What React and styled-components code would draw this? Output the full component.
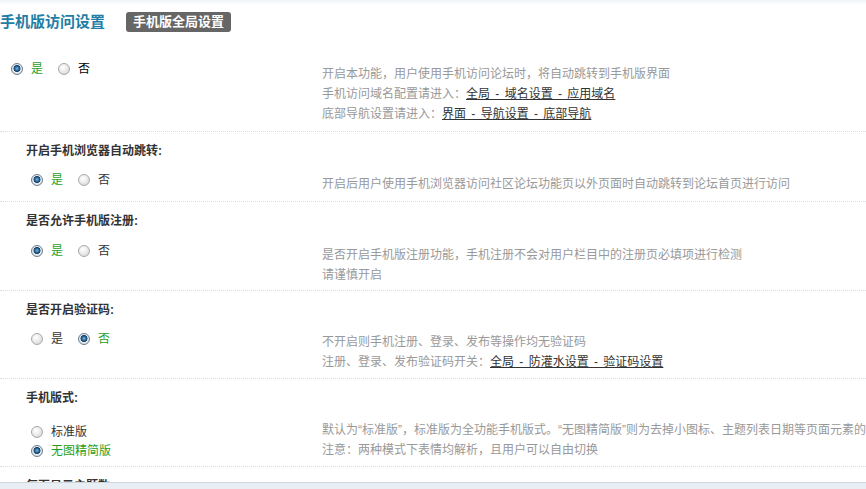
import styled, { createGlobalStyle } from 'styled-components'

const GlobalStyle = createGlobalStyle`
  html, body {
    margin: 0;
    padding: 0;
    background: #fff;
    overflow: hidden;
  }
  body {
    font-family: "Liberation Sans", "Noto Sans CJK SC", sans-serif;
    font-size: 12px;
    color: #333;
  }
`

const Page = styled.div`
  height: 489px;
  overflow: hidden;
  background: linear-gradient(#eef4fa 0, #fff 5px);
`

const TitleBar = styled.div`
  height: 46px;
  display: flex;
  align-items: flex-start;
  gap: 21px;
  padding-top: 12px;
  box-sizing: border-box;
`

const Title = styled.h3`
  margin: 0;
  font-size: 15px;
  line-height: 20px;
  font-weight: 700;
  color: #1e7ea5;
  white-space: nowrap;
`

const Badge = styled.span`
  display: inline-block;
  height: 20px;
  line-height: 20px;
  padding: 0 7px;
  background: #666;
  color: #fff;
  font-size: 13px;
  font-weight: 700;
  border-radius: 3px;
  white-space: nowrap;
`

const Setting = styled.div`
  border-bottom: 1px dotted #d6dde3;
  padding-bottom: ${p => p.$bottom ?? 7}px;
`

const Header = styled.div`
  padding: 9px 0 0 26px;
  line-height: 20px;
  font-weight: 700;
  color: #333;
  white-space: nowrap;
`

const Body = styled.div`
  display: grid;
  grid-template-columns: 322px 1fr;
  padding-top: ${p => p.$top ?? 9}px;
`

const Options = styled.ul`
  list-style: none;
  margin: 0;
  padding: 0 0 0 ${p => p.$indent ?? 31}px;
  display: flex;
  flex-direction: ${p => (p.$vertical ? 'column' : 'row')};
  gap: ${p => (p.$vertical ? '0' : '15px')};
  padding-top: ${p => p.$top ?? 0}px;
`

const Option = styled.li`
  display: flex;
  align-items: center;
  gap: 8px;
  height: ${p => (p.$vertical ? '19.5px' : '20px')};
  line-height: 20px;
  white-space: nowrap;
  color: ${p => (p.$checked ? '#1f9f1f' : p.$dark ? '#000' : '#333')};
`

const Radio = styled.span`
  width: 12px;
  height: 12px;
  box-sizing: border-box;
  border-radius: 50%;
  border: 1px solid ${p => (p.$checked ? '#6b7f90' : '#a9a9a9')};
  background: ${p =>
    p.$checked
      ? 'radial-gradient(circle at 50% 45%, #7fb6e0 0, #2a6a9c 2px, #163f62 3.2px, #e9edf1 3.8px, #cdd3d9 100%)'
      : 'radial-gradient(circle at 40% 35%, #ffffff 0, #eeeeee 40%, #cfcfcf 100%)'};
  flex: none;
`

const Tips = styled.div`
  color: #999;
  line-height: 20px;
  white-space: nowrap;
  padding-top: ${p => p.$top ?? 4}px;
`

const TipLink = styled.a`
  color: #333;
  text-decoration: underline;
  word-spacing: 2px;
`

const Footer = styled.div`
  position: fixed;
  left: 0;
  right: 0;
  bottom: 0;
  height: 6px;
  background: #e8eef3;
  border-top: 1px solid #cfd7de;
`

const RadioGroup = ({ items, value, indent, vertical, top, dark }) => (
  <Options $indent={indent} $vertical={vertical} $top={top}>
    {items.map(item => (
      <Option key={item} $checked={item === value} $vertical={vertical} $dark={dark && item !== value}>
        <Radio $checked={item === value} />
        {item}
      </Option>
    ))}
  </Options>
)

const App = () => {
  return (
    <Page>
      <GlobalStyle />
      <TitleBar>
        <Title>手机版访问设置</Title>
        <Badge>手机版全局设置</Badge>
      </TitleBar>

      <Setting $bottom={7}>
        <Body $top={13}>
          <RadioGroup items={['是', '否']} value="是" indent={11} dark />
          <Tips $top={5}>
            <div>开启本功能，用户使用手机访问论坛时，将自动跳转到手机版界面</div>
            <div>
              手机访问域名配置请进入：<TipLink>全局 - 域名设置 - 应用域名</TipLink>
            </div>
            <div>
              底部导航设置请进入：<TipLink>界面 - 导航设置 - 底部导航</TipLink>
            </div>
          </Tips>
        </Body>
      </Setting>

      <Setting $bottom={7}>
        <Header>开启手机浏览器自动跳转:</Header>
        <Body>
          <RadioGroup items={['是', '否']} value="是" />
          <Tips>开启后用户使用手机浏览器访问社区论坛功能页以外页面时自动跳转到论坛首页进行访问</Tips>
        </Body>
      </Setting>

      <Setting $bottom={5}>
        <Header>是否允许手机版注册:</Header>
        <Body $top={10}>
          <RadioGroup items={['是', '否']} value="是" />
          <Tips>
            <div>是否开启手机版注册功能，手机注册不会对用户栏目中的注册页必填项进行检测</div>
            <div>请谨慎开启</div>
          </Tips>
        </Body>
      </Setting>

      <Setting $bottom={6}>
        <Header>是否开启验证码:</Header>
        <Body>
          <RadioGroup items={['是', '否']} value="否" />
          <Tips $top={3}>
            <div>不开启则手机注册、登录、发布等操作均无验证码</div>
            <div>
              注册、登录、发布验证码开关：<TipLink>全局 - 防灌水设置 - 验证码设置</TipLink>
            </div>
          </Tips>
        </Body>
      </Setting>

      <Setting $bottom={5}>
        <Header>手机版式:</Header>
        <Body $top={12}>
          <RadioGroup items={['标准版', '无图精简版']} value="无图精简版" vertical top={2} />
          <Tips $top={0}>
            <div>默认为“标准版”，标准版为全功能手机版式。“无图精简版”则为去掉小图标、主题列表日期等页面元素的简洁版式</div>
            <div>注意：两种模式下表情均解析，且用户可以自由切换</div>
          </Tips>
        </Body>
      </Setting>

      <Setting>
        <Header>每页显示主题数:</Header>
      </Setting>

      <Footer />
    </Page>
  )
}

export default App
